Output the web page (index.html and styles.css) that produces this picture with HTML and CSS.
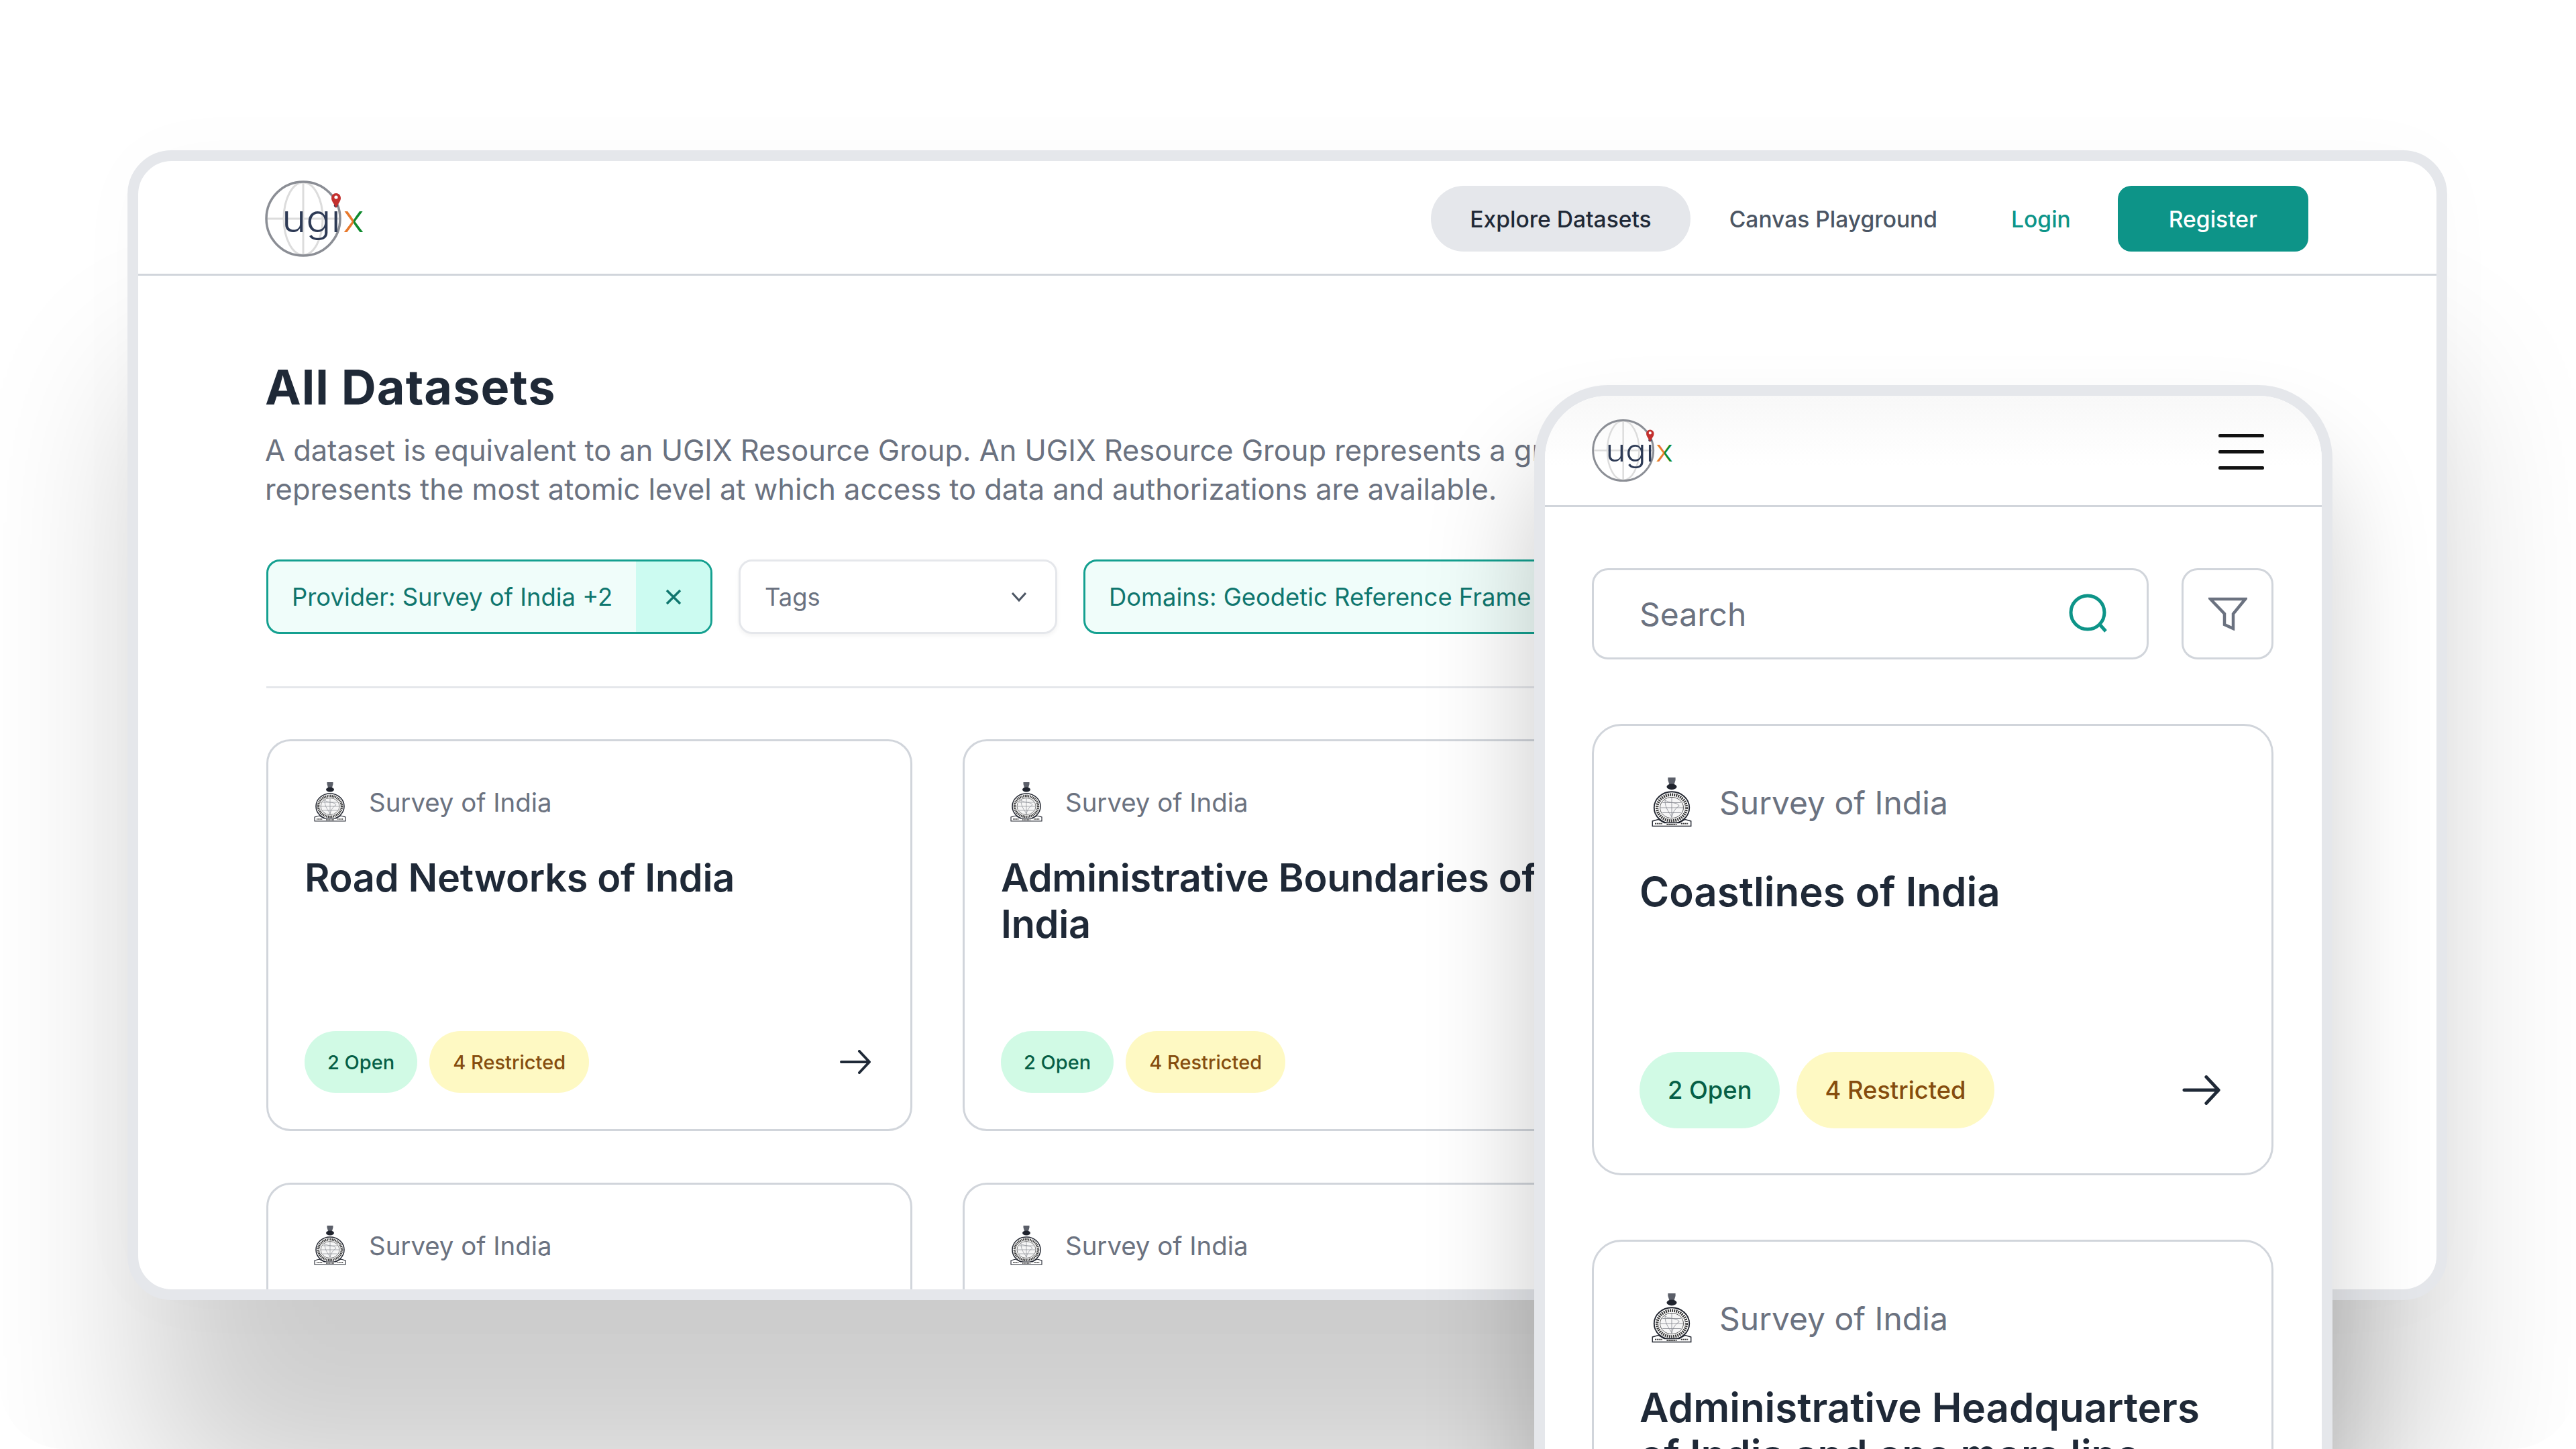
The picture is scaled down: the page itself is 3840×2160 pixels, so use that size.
FILE: index.html
```html
<!DOCTYPE html>
<html lang="en">

<head>
    <meta charset="UTF-8">
    <meta name="viewport" content="width=device-width, initial-scale=1.0">
    <title>UGIX Datasets</title>
    <link rel="stylesheet" href="styles.css">
</head>

<body>
    <svg class="defs" aria-hidden="true">
        <defs>
            <linearGradient id="xfill" gradientUnits="userSpaceOnUse" x1="512" y1="0" x2="542" y2="0">
                <stop offset="0.5" stop-color="#e8792c"></stop>
                <stop offset="0.5" stop-color="#0f8a2e"></stop>
            </linearGradient>
            <symbol id="logo" viewBox="395 267 149 117">
                <ellipse cx="452" cy="325" rx="29" ry="54" fill="none" stroke="#dcdcdc" stroke-width="3"></ellipse>
                <line x1="452" y1="271" x2="452" y2="380" stroke="#dcdcdc" stroke-width="3"></line>
                <line x1="398" y1="325" x2="506" y2="325" stroke="#dcdcdc" stroke-width="3"></line>
                <circle cx="452" cy="325" r="55" fill="none" stroke="#8b8e95" stroke-width="3.5"></circle>
                <text class="logo-text" x="420" y="345" textLength="88" lengthAdjust="spacingAndGlyphs">ugi</text>
                <text class="logo-x" x="511" y="345" textLength="32" lengthAdjust="spacingAndGlyphs" fill="url(#xfill)">x</text>
                <path d="M501 309 C497 301 494 299 494 294 A7 7 0 0 1 508 294 C508 299 505 301 501 309 Z" fill="#c3302e"></path>
                <circle cx="501" cy="293" r="2.6" fill="#fff"></circle>
            </symbol>
            <symbol id="seal" viewBox="0 0 48 60">
                <path d="M19.500 0 H28.500 V3 L27 8 H21 L19.500 3 Z" fill="#5b5f69"></path>
                <ellipse cx="24" cy="11" rx="6" ry="3.500" fill="#20242e"></ellipse>
                <ellipse cx="24" cy="36" rx="21" ry="19" fill="#fff" stroke="#20242e" stroke-width="1.500"></ellipse>
                <ellipse cx="24" cy="36" rx="17.500" ry="15.500" fill="none" stroke="#333" stroke-width="3.500" stroke-dasharray="1.500 1"></ellipse>
                <ellipse cx="24" cy="36" rx="14" ry="12.500" fill="#f6f6f6" stroke="#555" stroke-width="0.800"></ellipse>
                <path d="M24 24 V48 M10 36 H38 M13 30 H35 M13 42 H35 M16 27 C21 31 31 29 33 34 C29 36 26 40 24 47 C21 41 16 37 16 27 Z" fill="none" stroke="#8a8d94" stroke-width="0.700"></path>
                <path d="M1 52 L8 50 L15 54 H33 L40 50 L47 52 L47 58 H1 Z" fill="#fff" stroke="#20242e" stroke-width="1.100"></path>
                <path d="M4 55 H13 M18 56 H30 M35 55 H44" stroke="#333" stroke-width="1.700" stroke-dasharray="1.500 0.700"></path>
            </symbol>
            <symbol id="arrow" viewBox="0 0 46 36">
                <path d="M2 18 H43 M29 2 L44 18 L29 34" fill="none" stroke="#1f2937" stroke-width="4" stroke-linecap="round" stroke-linejoin="round"></path>
            </symbol>
        </defs>
    </svg>

    <div class="stage">
        <div class="tablet">
            <header class="topbar">
                <svg class="logo"><use href="#logo"></use></svg>
                <nav class="nav">
                    <a class="nav-item nav-active">Explore Datasets</a>
                    <a class="nav-item">Canvas Playground</a>
                    <a class="nav-login">Login</a>
                    <a class="nav-register">Register</a>
                </nav>
            </header>

            <main class="content">
                <h1 class="page-title">All Datasets</h1>
                <p class="page-desc">A dataset is equivalent to an UGIX Resource Group. An UGIX Resource Group represents a group of related Resource Items, and a Resource Item<br>represents the most atomic level at which access to data and authorizations are available.</p>

                <div class="filters">
                    <div class="chip">
                        <span class="chip-label">Provider: Survey of India +2</span>
                        <span class="chip-clear">
                            <svg class="icon-x" viewBox="0 0 24 24"><path d="M2 2 L22 22 M22 2 L2 22"></path></svg>
                        </span>
                    </div>
                    <div class="select">
                        <span>Tags</span>
                        <svg class="icon-chevron" viewBox="0 0 24 16"><path d="M2 2 L12 13 L22 2"></path></svg>
                    </div>
                    <div class="chip chip-wide">
                        <span class="chip-label">Domains: Geodetic Reference Frame +3</span>
                    </div>
                </div>

                <div class="divider"></div>

                <div class="cards">
                    <article class="card">
                        <div class="card-head">
                            <svg class="seal"><use href="#seal"></use></svg>
                            <span>Survey of India</span>
                        </div>
                        <h2 class="card-title">Road Networks of India</h2>
                        <div class="card-foot">
                            <span class="pill pill-open">2 Open</span>
                            <span class="pill pill-restricted">4 Restricted</span>
                            <svg class="arrow"><use href="#arrow"></use></svg>
                        </div>
                    </article>
                    <article class="card">
                        <div class="card-head">
                            <svg class="seal"><use href="#seal"></use></svg>
                            <span>Survey of India</span>
                        </div>
                        <h2 class="card-title">Administrative Boundaries of India</h2>
                        <div class="card-foot">
                            <span class="pill pill-open">2 Open</span>
                            <span class="pill pill-restricted">4 Restricted</span>
                            <svg class="arrow"><use href="#arrow"></use></svg>
                        </div>
                    </article>
                    <article class="card">
                        <div class="card-head">
                            <svg class="seal"><use href="#seal"></use></svg>
                            <span>Survey of India</span>
                        </div>
                    </article>
                    <article class="card">
                        <div class="card-head">
                            <svg class="seal"><use href="#seal"></use></svg>
                            <span>Survey of India</span>
                        </div>
                    </article>
                </div>
            </main>
        </div>

        <div class="phone">
            <header class="phone-bar">
                <svg class="logo"><use href="#logo"></use></svg>
                <div class="burger"><i></i><i></i><i></i></div>
            </header>

            <div class="phone-body">
                <div class="search-row">
                    <div class="search">
                        <span>Search</span>
                        <svg class="icon-search" viewBox="0 0 60 60"><circle cx="28" cy="28" r="25"></circle><path d="M47 47 L55 56"></path></svg>
                    </div>
                    <div class="filter-btn">
                        <svg class="icon-filter" viewBox="0 0 58 50"><path d="M3 3 H55 L37 25 V47 L24 41 V25 Z"></path></svg>
                    </div>
                </div>

                <article class="card">
                    <div class="card-head">
                        <svg class="seal"><use href="#seal"></use></svg>
                        <span>Survey of India</span>
                    </div>
                    <h2 class="card-title">Coastlines of India</h2>
                    <div class="card-foot">
                        <span class="pill pill-open">2 Open</span>
                        <span class="pill pill-restricted">4 Restricted</span>
                        <svg class="arrow"><use href="#arrow"></use></svg>
                    </div>
                </article>
                <article class="card">
                    <div class="card-head">
                        <svg class="seal"><use href="#seal"></use></svg>
                        <span>Survey of India</span>
                    </div>
                    <h2 class="card-title">Administrative Headquarters of India and one more line</h2>
                </article>
            </div>
        </div>
    </div>
</body>

</html>
```

FILE: styles.css
```css
* {
    box-sizing: border-box;
}

body {
    margin: 0;
    background: #fff;
    font-family: Inter, "Liberation Sans", sans-serif;
    color: #1f2937;
}

.defs {
    position: absolute;
    width: 0;
    height: 0;
}

.stage {
    position: relative;
    width: 3840px;
    height: 2160px;
    padding: 224px 190px 0;
    border-radius: 96px;
    overflow: hidden;
    background: #fff;
}

/* tablet frame */
.tablet {
    width: 3458px;
    height: 1714px;
    border: 16px solid #e5e7eb;
    border-radius: 66px;
    overflow: hidden;
    background: #fff;
    box-shadow: 0 320px 300px -30px rgba(0, 0, 0, 0.195), 0 0 120px rgba(0, 0, 0, 0.02);
}

.topbar {
    display: flex;
    align-items: center;
    justify-content: space-between;
    height: 171px;
    padding: 4px 191px 0 189px;
    border-bottom: 3px solid #d1d5db;
}

.logo {
    display: block;
    width: 149px;
    height: 117px;
}

.logo-text {
    font-family: Inter, sans-serif;
    font-size: 56px;
    font-weight: 300;
    fill: #2d3a55;
}

.logo-x {
    font-family: Inter, sans-serif;
    font-size: 56px;
    font-weight: 300;
}

.nav {
    display: flex;
    align-items: center;
    height: 98px;
    font-size: 33.6px;
    font-weight: 500;
}

.nav-item {
    display: flex;
    align-items: center;
    height: 98px;
    padding: 0 58px;
    border-radius: 49px;
    color: #4b5563;
}

.nav-active {
    background: #e5e7eb;
    color: #1f2937;
}

.nav-login {
    margin: 0 70px 0 52px;
    color: #0d9488;
}

.nav-register {
    display: flex;
    align-items: center;
    height: 98px;
    padding: 0 76px;
    border-radius: 20px;
    background: #0d9488;
    color: #fff;
}

.content {
    padding: 123px 0 0 191px;
}

.page-title {
    margin: 0 0 0 -2px;
    font-size: 72px;
    line-height: 86px;
    font-weight: 700;
    letter-spacing: 1px;
}

.page-desc {
    margin: 22px 0 76px -2px;
    font-size: 43.4px;
    line-height: 58px;
    color: #6b7280;
    white-space: nowrap;
}

.filters {
    display: flex;
    gap: 39px;
    font-size: 36.4px;
}

.chip {
    display: flex;
    align-items: stretch;
    width: 665px;
    height: 111px;
    border: 3px solid #14a090;
    border-radius: 20px;
    overflow: hidden;
    background: #f0fdfa;
    color: #0f766e;
    white-space: nowrap;
}

.chip-wide {
    width: 1000px;
}

.chip-label {
    flex: 1;
    display: flex;
    align-items: center;
    padding-left: 35px;
}

.chip-clear {
    display: flex;
    align-items: center;
    justify-content: center;
    width: 111px;
    background: #ccfbf1;
}

.icon-x {
    width: 24px;
    height: 24px;
    fill: none;
    stroke: #0f766e;
    stroke-width: 3.5;
}

.select {
    display: flex;
    align-items: center;
    justify-content: space-between;
    width: 475px;
    height: 111px;
    padding: 0 42px 0 36px;
    border: 3px solid #e5e7eb;
    border-radius: 20px;
    color: #6b7280;
    box-shadow: 0 3px 6px rgba(0, 0, 0, 0.05);
}

.icon-chevron {
    width: 24px;
    height: 16px;
    fill: none;
    stroke: #4b5563;
    stroke-width: 3;
}

.divider {
    width: 2240px;
    height: 3px;
    margin: 78px 0 76px;
    background: #e5e7eb;
}

.cards {
    display: grid;
    grid-template-columns: 963px 964px;
    grid-auto-rows: 584px;
    gap: 77px 75px;
}

.card {
    display: flex;
    flex-direction: column;
    padding: 61px 54px 54px;
    border: 3px solid #d1d5db;
    border-radius: 36px;
    background: #fff;
}

.card-head {
    display: flex;
    align-items: center;
    gap: 34px;
    font-size: 38.4px;
    color: #6b7280;
}

.seal {
    flex: none;
    width: 48px;
    height: 60px;
    margin-left: 14px;
}

.card-title {
    margin: 48px 0 0;
    font-size: 57.6px;
    line-height: 69px;
    font-weight: 600;
    letter-spacing: -0.3px;
    color: #1f2937;
}

.card-foot {
    display: flex;
    align-items: center;
    gap: 18px;
    margin-top: auto;
}

.pill {
    display: flex;
    align-items: center;
    height: 92px;
    padding: 0 34px;
    border-radius: 46px;
    font-size: 29px;
    font-weight: 500;
}

.pill-open {
    background: #d1fae5;
    color: #065f46;
}

.pill-restricted {
    padding: 0 35px;
    background: #fef9c3;
    color: #854d0e;
}

.arrow {
    width: 46px;
    height: 36px;
    margin: 0 5px 0 auto;
}

/* phone frame, sits over the tablet */
.phone {
    position: absolute;
    left: 2287px;
    top: 574px;
    width: 1190px;
    height: 1760px;
    border: 16px solid #e5e7eb;
    border-radius: 110px;
    background: #fff;
    overflow: hidden;
    box-shadow: -8px 110px 160px rgba(0, 0, 0, 0.2);
}

.phone-bar {
    display: flex;
    align-items: center;
    justify-content: space-between;
    height: 166px;
    padding: 0 86px 0 70px;
    border-bottom: 3px solid #d1d5db;
    background: linear-gradient(#f8f8f8, #fff 65%);
}

.phone-bar .logo {
    width: 122px;
    height: 96px;
}

.burger {
    display: flex;
    flex-direction: column;
    gap: 19px;
    width: 68px;
    margin-top: 3px;
}

.burger i {
    display: block;
    height: 5px;
    border-radius: 2px;
    background: #111;
}

.phone-body {
    display: flex;
    flex-direction: column;
    gap: 96px;
    padding: 91px 72px 0 70px;
}

.search-row {
    display: flex;
    gap: 49px;
}

.search {
    flex: 1;
    display: flex;
    align-items: center;
    justify-content: space-between;
    height: 136px;
    padding: 0 56px 0 68px;
    border: 3px solid #d1d5db;
    border-radius: 24px;
    font-size: 48px;
    color: #6b7280;
}

.icon-search {
    width: 60px;
    height: 60px;
    fill: none;
    stroke: #0d9488;
    stroke-width: 5;
}

.filter-btn {
    display: flex;
    align-items: center;
    justify-content: center;
    width: 137px;
    height: 136px;
    border: 3px solid #d1d5db;
    border-radius: 24px;
}

.icon-filter {
    width: 58px;
    height: 50px;
    fill: none;
    stroke: #6b7280;
    stroke-width: 4.5;
}

.phone .card {
    height: 673px;
    padding: 77px 74px 67px 68px;
    border-radius: 44px;
}

.phone .card-head {
    gap: 41px;
    font-size: 48px;
}

.phone .seal {
    width: 60px;
    height: 75px;
    margin-left: 18px;
}

.phone .card-title {
    margin-top: 60px;
    font-size: 60px;
    line-height: 70px;
    letter-spacing: 0;
}

.phone .card-foot {
    gap: 25px;
}

.phone .pill {
    height: 114px;
    padding: 0 42px;
    border-radius: 57px;
    font-size: 36.3px;
}

.phone .arrow {
    width: 57px;
    height: 44px;
    margin-right: 2px;
}
```
